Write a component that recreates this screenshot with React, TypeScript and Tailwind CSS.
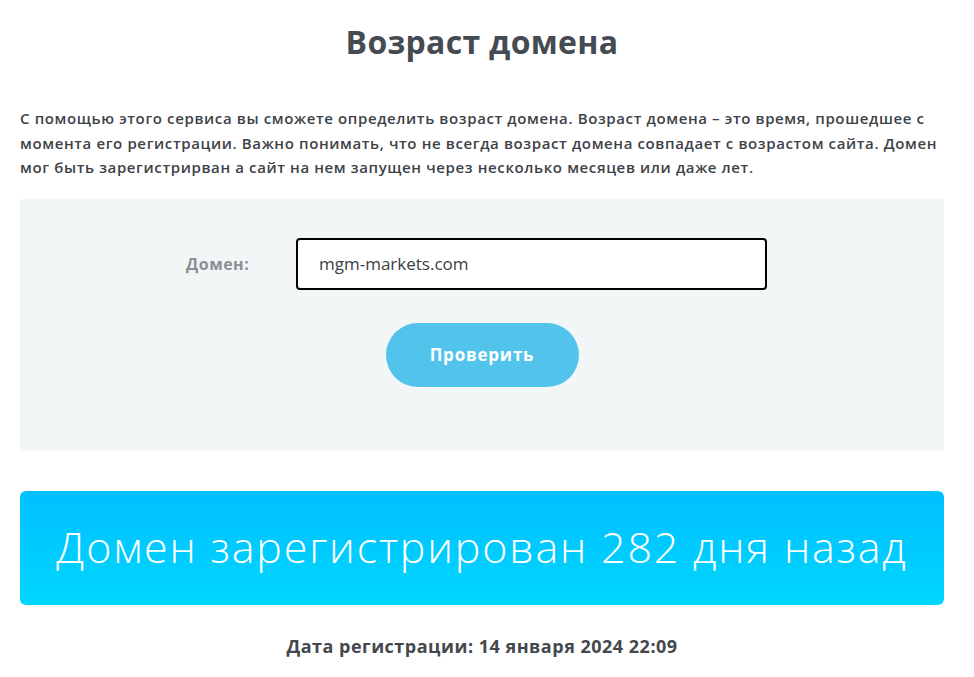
export default function App() {
  return (
    <div className="min-h-screen bg-white pl-5 pr-[30px] font-['Open_Sans',sans-serif] text-[#3a3f45]">
      <h1 className="pt-[22px] text-center text-[32px] font-bold leading-[40px] tracking-[0.3px] text-[#454b52]">
        Возраст домена
      </h1>

      <p className="mt-[44px] whitespace-nowrap text-[15px] font-semibold leading-[24.5px] tracking-[0.62px] text-[#3d4247]">
        С помощью этого сервиса вы сможете определить возраст домена. Возраст домена – это время, прошедшее с
        <br />
        момента его регистрации. Важно понимать, что не всегда возраст домена совпадает с возрастом сайта. Домен
        <br />
        мог быть зарегистрирван а сайт на нем запущен через несколько месяцев или даже лет.
      </p>

      <form
        onSubmit={(e) => e.preventDefault()}
        className="mt-[19px] flex h-[252px] flex-col items-center bg-[#f3f6f7] pt-[39px]"
      >
        <div className="flex items-center pr-[11px]">
          <label className="w-[110px] text-[16px] font-bold tracking-[0.5px] text-[#8c8f93]">Домен:</label>
          <input
            defaultValue="mgm-markets.com"
            className="h-[52px] w-[471px] rounded-[4px] border-2 border-black bg-white px-[21px] text-[17px] text-[#3a3f45] outline-none"
          />
        </div>
        <button
          type="submit"
          className="mt-[33px] h-[64px] w-[193px] rounded-full bg-[#52c3ea] text-[17px] font-bold tracking-[0.8px] text-white"
        >
          Проверить
        </button>
      </form>

      <div className="mt-[40px] flex h-[114px] items-center justify-center rounded-[6px] bg-gradient-to-b from-[#00bfff] to-[#00d6ff]">
        <span className="text-[43px] font-light tracking-[1.8px] text-white">Домен зарегистрирован 282 дня назад</span>
      </div>

      <p className="mt-[28px] text-center text-[18px] font-bold leading-[26px] tracking-[0.5px] text-[#44484d]">
        Дата регистрации: 14 января 2024 22:09
      </p>
    </div>
  );
}
